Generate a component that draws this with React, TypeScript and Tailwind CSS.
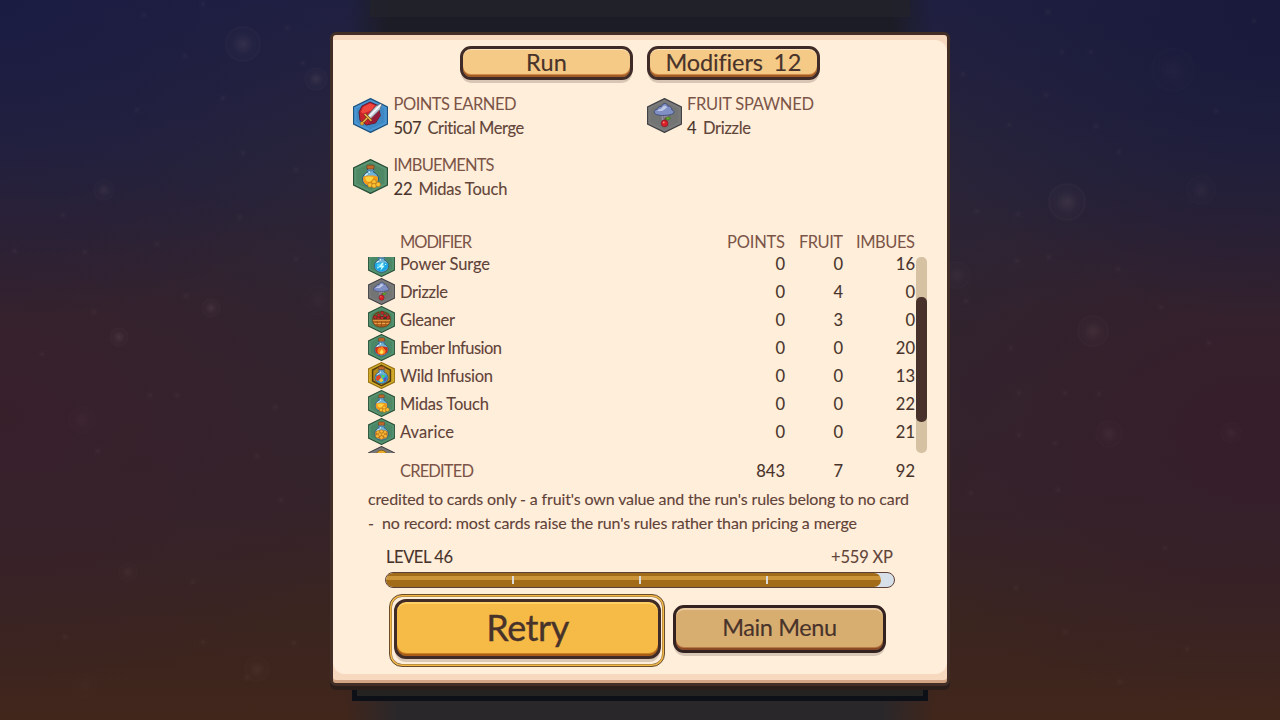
import { useLayoutEffect, useRef, useState, type ReactNode } from "react";
import clsx from "clsx";

/** Single-line label whose tracking is adjusted so that it fills `w` pixels. */
function Label({ children, w, className }: { children: string; w: number; className?: string }) {
  const ref = useRef<HTMLSpanElement>(null);
  const [spacing, setSpacing] = useState(0);
  useLayoutEffect(() => {
    const el = ref.current;
    if (!el || children.length < 2) return;
    el.style.letterSpacing = "0px";
    const next = (w - el.getBoundingClientRect().width) / (children.length - 1);
    el.style.letterSpacing = `${next}px`;
    setSpacing(next);
  }, [children, w]);
  return (
    <span className={clsx("block shrink-0 whitespace-pre", className)} style={{ width: w }}>
      <span ref={ref} style={{ letterSpacing: spacing }}>
        {children}
      </span>
    </span>
  );
}

type Kind = "sword" | "drizzle" | "midas" | "surge" | "gleaner" | "ember" | "wild" | "avarice" | "coin";

const frames: Record<Kind, [string, string, string]> = {
  sword: ["#4a96d3", "#1d527f", "#3279b5"],
  drizzle: ["#7b7b7b", "#404246", "#6c6d6e"],
  midas: ["#5b9470", "#285039", "#447b59"],
  surge: ["#549370", "#285039", "#3f7c5c"],
  gleaner: ["#559370", "#285039", "#3f7c5c"],
  ember: ["#559370", "#285039", "#3f7c5c"],
  wild: ["#d2ab2b", "#94700f", "#b38b1c"],
  avarice: ["#559370", "#285039", "#3f7c5c"],
  coin: ["#7b7b7b", "#404246", "#6c6d6e"],
};

function Flask({ liquid, glow, children, className }: { liquid: string; glow: string; children?: ReactNode; className?: string }) {
  return (
    <g className={className}>
      <path d="M14.500 9.500h6v3.800c3 1.200 4.800 3.700 4.800 6.700 0 4.300-3.300 7.300-7.800 7.300s-7.800-3-7.800-7.300c0-3 1.800-5.500 4.800-6.700z" fill="#6fb3d6" stroke="#2b5275" strokeWidth=".9" />
      <path d="M10.600 17.600c3-1.600 10.800-1.600 13.800 0 1.600 5-1.600 8.800-6.900 8.800s-8.500-3.800-6.900-8.800z" fill={liquid} />
      <path d="M12.300 18.400c2-1.200 6-1.300 8-.3-.3 3.400-2.300 4.700-4.600 4.500-2.200-.1-3.400-2-3.400-4.200z" fill={glow} />
      <path d="M16.300 11.500v2.600M12.300 16.600c.7-1.100 1.500-1.600 2.800-1.900" stroke="#dcf5fa" strokeWidth="1.200" fill="none" />
      <rect x="14" y="6.400" width="7" height="3.800" rx="1" fill="#c06a2a" stroke="#6f3718" strokeWidth=".6" />
      <path d="M13.600 11.800h7.800" stroke="#4a86b0" strokeWidth="1.200" />
      {children}
    </g>
  );
}

function Art({ kind }: { kind: Kind }) {
  if (kind === "sword")
    return (
      <g>
        <path d="M9 8l8-4 8 3.500 2.300 10-4.800 7.500-9 2-6.500-4.500L6 14z" fill="#c9222b" stroke="#5d2038" strokeWidth="1" />
        <path d="M10 9l7-3.500 5 2-4 5-8 3-2-1.500z" fill="#f0463e" />
        <path d="M23 13l3.300 1.500.2 3.500-4.500 6.500-7 1 4-5z" fill="#931a38" />
        <path d="M28.800 5.500l-1.600 5.800L17.400 21l-3.400-3 9-10z" fill="#c3ccd4" stroke="#56616f" strokeWidth=".7" />
        <path d="M27.800 6.600L16 18.700" stroke="#f7fbfd" strokeWidth="1.500" />
        <path d="M11.600 16l6.800 6.700" stroke="#6b401c" strokeWidth="2.800" />
        <path d="M14.200 20l-4.400 4.500" stroke="#6b401c" strokeWidth="2.600" />
        <path d="M11.600 16l6.800 6.700M14.200 20l-4.400 4.500" stroke="#eeb646" strokeWidth="1.500" />
        <circle cx="9" cy="25.400" r="1.800" fill="#e9a931" stroke="#7c521b" strokeWidth=".5" />
      </g>
    );
  if (kind === "drizzle")
    return (
      <g>
        <path d="M15.500 16v6M17.800 15.500v4M20 16v4" stroke="#9d8fa8" strokeWidth="1.400" />
        <path d="M7.500 15.200c-.9-2.200.8-4 2.900-4 .5-2.200 2.300-3 3.900-2.600 1.500-4.200 6-3.800 6.700-.6 2.500-.3 3.700 2 3.800 3.800 2 .4 2.700 2 1.900 3.400-2.700 2-6.300 2-9.400 2.200-3.600.1-7.700 0-9.800-2.200z" fill="#8090c4" stroke="#414b75" strokeWidth=".9" />
        <path d="M10 12.500c1.500-1.700 3.700-.3 5-3 1.800-2.500 4.200-2.100 5 .3-2.300.5-2.700 2.900-5.300 3.100-1.700.2-3.300.3-4.700-.4z" fill="#bdc9e6" />
        <path d="M17.800 24c0-2 .4-3.300 1.500-4.700" stroke="#6c3c22" strokeWidth="1" fill="none" />
        <path d="M18.600 21.200c1.200-2.500 3.400-2.700 5-1.200-.9 2-3.200 2.500-5 1.200z" fill="#66ad27" stroke="#32621c" strokeWidth=".5" />
        <circle cx="17.600" cy="25.400" r="3.300" fill="#dc2027" stroke="#7e1924" strokeWidth=".7" />
        <circle cx="16.700" cy="24.400" r=".9" fill="#ff8a7d" />
      </g>
    );
  if (kind === "gleaner")
    return (
      <g>
        <path d="M6.500 18C5 4.500 30 3.500 28.500 18" fill="none" stroke="#713714" strokeWidth="1.600" />
        <path d="M8 13h19v6H8z" fill="#2b4226" />
        <path d="M14 16l1.500-9M22 8l-3 9M9 11l5 4" stroke="#3f7a2c" strokeWidth="1.600" />
        {[[9.5, 14.5], [14, 12], [18, 15.5], [22, 12.5], [26, 15], [18.500, 9], [13.500, 16.500]].map(([x, y]) => (
          <circle key={`${x}-${y}`} cx={x} cy={y} r="2.200" fill="#c02827" stroke="#651b20" strokeWidth=".5" />
        ))}
        <path d="M6 17.500h23c0 6-4 9.800-11.500 9.800S6 23.500 6 17.500z" fill="#b5641f" stroke="#6b3214" strokeWidth=".9" />
        <path d="M6.300 18.600h22.400M8.500 22.800h18" stroke="#e9a548" strokeWidth="1.300" />
        <path d="M12 20v5M17.500 20v6.500M23 20v5" stroke="#824112" strokeWidth=".8" />
      </g>
    );
  if (kind === "surge")
    return (
      <Flask className="origin-[17.5px_17.5px] scale-[1.16]" liquid="#18a6e4" glow="#4dcdf6">
        <path d="M18 16.500l-3.500 5h3l-1.300 4.200 5-5.700h-3.200l2.200-3.200z" fill="#c9fbff" />
        <circle cx="13.500" cy="22" r="1" fill="#b6f5ff" />
        <circle cx="22" cy="18.500" r=".8" fill="#b6f5ff" />
      </Flask>
    );
  if (kind === "ember")
    return (
      <Flask className="origin-[17.5px_17.5px] scale-[1.12]" liquid="#c9301a" glow="#e04318">
        <path d="M17.800 14.800c.3 3 5.100 4.200 4.400 7.600-.4 2.200-2.600 3.400-4.800 3.400-2.700 0-4.700-1.700-4.600-3.900.1-1.900 1.500-2.300 1.400-4.300 2 .9 3.300-.5 3.600-2.800z" fill="#ff8c1c" />
        <path d="M17.700 19.500c1.200 1.500 2.400 2.500 1.800 4.200-.9 1.700-3.600 1.600-4-.1-.2-1.500 1.600-2.100 2.200-4.100z" fill="#ffe55a" />
      </Flask>
    );
  if (kind === "wild")
    return (
      <g>
        <path d="M17.500 4.200l11.500 6.200v14.200l-11.500 6.200L6 24.600V10.400z" fill="#b28a1e" stroke="#4f3c10" strokeWidth="1.800" />
        <Flask className="origin-[17.5px_17.5px] scale-[1.06]" liquid="#24a0dd" glow="#3aa9dd">
          <path d="M11 18.500l4.500-2 1.500 3.500-4 4.500-2-2z" fill="#e84527" />
          <path d="M17 16.500l5.500 1-3.500 3.500z" fill="#5fd04e" />
          <path d="M14 24l3.500-4 2.500 4-3 1.800z" fill="#eecb36" />
          <path d="M20.500 21.500l3.200-2.500-.7 4.500-2 1.500z" fill="#7542b2" />
        </Flask>
      </g>
    );
  if (kind === "coin") return <circle cx="17.500" cy="13" r="7.500" fill="#e9ab27" stroke="#7e5414" strokeWidth="1" />;
  if (kind === "avarice")
    return (
      <Flask className="origin-[17.5px_17.5px] scale-[1.12]" liquid="#c97a1a" glow="#f8bd34">
        {[[13.5, 18.5], [17.5, 17.5], [21.5, 18.5], [15.500, 21], [19.5, 21], [12.800, 22.8], [22, 22.8], [17.500, 24.500]].map(([x, y]) => (
          <circle key={`${x}-${y}`} cx={x} cy={y} r="2.100" fill="#f9b838" stroke="#a96611" strokeWidth=".6" />
        ))}
      </Flask>
    );
  return (
    <Flask className="origin-[17.5px_17.5px] scale-[1.02]" liquid="#f49c18" glow="#ffd23f">
      {[[17, 25.800], [21, 22.800], [21, 26.500], [25, 25.300]].map(([x, y]) => (
        <circle key={`${x}-${y}`} cx={x} cy={y} r="2.300" fill="#fcc033" stroke="#b06c14" strokeWidth=".6" />
      ))}
    </Flask>
  );
}

function CardIcon({ kind, className }: { kind: Kind; className: string }) {
  const [fill, edge, shade] = frames[kind];
  return (
    <svg viewBox="0 0 35 35" className={clsx("block shrink-0", className)}>
      <path d="M17.500.6L34.500 9v17L17.500 34.400.5 26V9z" fill={fill} stroke={edge} strokeWidth="1.300" />
      <path d="M17.500 3.200L32 10.400v14.200L17.500 31.800 3 24.600V10.400z" fill={shade} fillOpacity=".5" stroke={fill} strokeWidth="1" />
      <Art kind={kind} />
    </svg>
  );
}

function TabButton({ children }: { children: ReactNode }) {
  return (
    <button className="flex h-[34px] w-[173px] items-start justify-center rounded-[11px] border-[3px] border-[#3f2c28] bg-[#f5ca86] text-[23.5px] leading-[26px] text-[#48332b] shadow-[inset_0_1px_0_#ffe5bd,inset_0_-2px_0_#a35b26,inset_0_-3px_0_#cf8b48,0_4px_0_-1px_#d9c6b5] [-webkit-text-stroke:0.15px_#48332b]">
      {children}
    </button>
  );
}

function Stat({ kind, title, titleW, value, valueW, name, nameW }: { kind: Kind; title: string; titleW: number; value: string; valueW: number; name: string; nameW: number }) {
  return (
    <div className="flex h-[49px] w-[293.500px] items-start">
      <CardIcon kind={kind} className="mt-[7px] h-[35px] w-[35px]" />
      <div className="ml-[5.500px]">
        <Label w={titleW} className="h-[25px] leading-[26.500px] text-[#7b5447]">{title}</Label>
        <div className="flex gap-1.5 leading-[25px] [-webkit-text-stroke:0.12px_currentColor]">
          <Label w={valueW} className="text-[#48332b]">{value}</Label>
          <Label w={nameW} className="text-[#624439]">{name}</Label>
        </div>
      </div>
    </div>
  );
}

const rows: { kind: Kind; name: string; w: number; v: [string, string, string] }[] = [
  { kind: "surge", name: "Power Surge", w: 90, v: ["0", "0", "16"] },
  { kind: "drizzle", name: "Drizzle", w: 48, v: ["0", "4", "0"] },
  { kind: "gleaner", name: "Gleaner", w: 55, v: ["0", "3", "0"] },
  { kind: "ember", name: "Ember Infusion", w: 102, v: ["0", "0", "20"] },
  { kind: "wild", name: "Wild Infusion", w: 93, v: ["0", "0", "13"] },
  { kind: "midas", name: "Midas Touch", w: 89, v: ["0", "0", "22"] },
  { kind: "avarice", name: "Avarice", w: 54, v: ["0", "0", "21"] },
];

const grid = "grid grid-cols-[32px_327px_58px_58px_72px] items-center";

const bokeh = [
  [243, 44, 17, 0.75], [316, 79, 11, 0.8], [104, 190, 10, 0.6], [211, 308, 9, 0.8], [119, 337, 9, 0.8], [82, 420, 13, 0.3],
  [128, 572, 9, 0.45], [257, 669, 12, 0.45], [85, 685, 12, 0.2], [318, 300, 14, 0.25], [1173, 70, 21, 0.25], [1067, 202, 18, 0.8],
  [1201, 190, 14, 0.4], [957, 275, 13, 0.4], [1093, 331, 15, 0.6], [1109, 434, 13, 0.5], [1231, 433, 10, 0.4],
];

const motes = [
  [203, 4], [144, 15], [287, 28], [185, 56], [303, 63], [137, 110], [223, 98], [243, 153], [296, 170], [63, 215], [240, 217], [85, 252],
  [15, 251], [296, 259], [157, 244], [186, 296], [94, 312], [42, 354], [150, 395], [177, 395], [275, 407], [257, 456], [98, 451],
  [281, 500], [193, 582], [203, 642], [247, 678], [294, 643], [65, 637], [1048, 12], [963, 74], [1062, 52], [1091, 52], [1046, 95],
  [1009, 125], [1096, 126], [1119, 152], [977, 211], [1018, 214], [1049, 257], [1017, 261], [966, 301], [1118, 269], [1161, 307],
  [1209, 343], [1011, 348], [1019, 393], [1065, 393], [1099, 394], [1055, 443], [1019, 435], [971, 493], [1058, 490], [1165, 548],
  [1187, 649], [1065, 632], [1016, 588], [1216, 111], [1254, 21], [1120, 682],
];

function Backdrop() {
  return (
    <svg viewBox="0 0 1280 720" className="absolute inset-0 h-[720px] w-[1280px]">
      <defs>
        <radialGradient id="glow">
          <stop offset="0" stopColor="#b69a96" stopOpacity=".17" />
          <stop offset=".55" stopColor="#b69a96" stopOpacity=".04" />
          <stop offset=".82" stopColor="#b69a96" stopOpacity=".02" />
          <stop offset=".9" stopColor="#b69a96" stopOpacity=".06" />
          <stop offset="1" stopColor="#b69a96" stopOpacity="0" />
        </radialGradient>
        <linearGradient id="top">
          <stop offset="0" stopColor="#1c1c26" stopOpacity="0" />
          <stop offset=".07" stopColor="#1c1c26" />
          <stop offset=".93" stopColor="#1c1c26" />
          <stop offset="1" stopColor="#1c1c26" stopOpacity="0" />
        </linearGradient>
        <linearGradient id="bottom">
          <stop offset="0" stopColor="#2a272a" stopOpacity="0" />
          <stop offset=".09" stopColor="#2a272a" />
          <stop offset=".91" stopColor="#2a272a" />
          <stop offset="1" stopColor="#2a272a" stopOpacity="0" />
        </linearGradient>
      </defs>
      {bokeh.map(([x, y, r, o]) => (
        <circle key={`${x}-${y}`} cx={x} cy={y} r={r * 1.1} fill="url(#glow)" opacity={o} />
      ))}
      {motes.map(([x, y]) => (
        <circle key={`${x}-${y}`} cx={x} cy={y} r="4.500" fill="url(#glow)" opacity=".4" />
      ))}
      <rect x="348" y="0" width="584" height="40" fill="url(#top)" />
      <rect x="370" y="0" width="540" height="17" fill="#22222b" opacity=".9" />
      <rect x="345" y="690" width="590" height="30" fill="url(#bottom)" />
      <rect x="354.500" y="670" width="571" height="28.500" fill="#242321" stroke="#0e1018" strokeWidth="5" />
    </svg>
  );
}

export default function App() {
  return (
    <div className="relative flex h-[720px] w-[1280px] justify-center overflow-hidden bg-[radial-gradient(ellipse_420px_320px_at_0%_0%,#1b1c42_0%,transparent_100%),radial-gradient(ellipse_420px_320px_at_100%_0%,#191a3c_10%,transparent_100%),radial-gradient(ellipse_400px_280px_at_0%_58%,#38202b_0%,transparent_100%),radial-gradient(ellipse_400px_280px_at_98%_60%,#361e2a_0%,transparent_100%),linear-gradient(180deg,#202042_0%,#28243a_20%,#30242f_45%,#34232a_70%,#3b251f_87%,#41261b_100%)] font-[Lato,'Open_Sans',sans-serif] text-[16.5px]">
      <Backdrop />
      <main className="relative mt-[32px] h-[654px] w-[620px] rounded-[6px] border-[3px] border-[#432d27] bg-[#f6d9bf] shadow-[inset_0_-3px_0_#d4a585,0_4px_0_#2b1d19]">
        <div className="h-[639px] w-full pt-[5px]">
          <div className="h-[634px] rounded-tr-[12px] rounded-b-[12px] bg-[#ffeeda] pt-[6px]">
            <nav className="flex justify-center gap-[14px]">
              <TabButton><Label w={41}>Run</Label></TabButton>
              <TabButton>
                <span className="flex gap-[11px]">
                  <Label w={97}>Modifiers</Label>
                  <Label w={28}>12</Label>
                </span>
              </TabButton>
            </nav>

            <section className="ml-[20px] mt-[11px] flex h-[139px] flex-wrap content-start gap-y-[12px]">
              <Stat kind="sword" title="POINTS EARNED" titleW={123} value="507" valueW={28} name="Critical Merge" nameW={97} />
              <Stat kind="drizzle" title="FRUIT SPAWNED" titleW={127} value="4" valueW={10} name="Drizzle" nameW={48} />
              <Stat kind="midas" title="IMBUEMENTS" titleW={101} value="22" valueW={19} name="Midas Touch" nameW={89} />
            </section>

            <section className="ml-[35px] w-[559px]">
              <div className={clsx(grid, "h-[24px] leading-6 text-[#7b5447]")}>
                <span />
                <Label w={72}>MODIFIER</Label>
                <Label w={58} className="justify-self-end">POINTS</Label>
                <Label w={44} className="justify-self-end">FRUIT</Label>
                <Label w={59} className="justify-self-end">IMBUES</Label>
              </div>
              <div className="mt-[3px] flex h-[196px] overflow-hidden">
                <div className="-mt-[7px] w-[548px] shrink-0">
                  {rows.map((r) => (
                    <div key={r.name} className={clsx(grid, "h-[28px] leading-[14px] text-[#48332b] [-webkit-text-stroke:0.1px_currentColor]")}>
                      <CardIcon kind={r.kind} className="-mt-px h-[27px] w-[27px]" />
                      <Label w={r.w} className="text-[#5f4238]">{r.name}</Label>
                      {r.v.map((n, i) => (
                        <span key={i} className="text-right">{n}</span>
                      ))}
                    </div>
                  ))}
                  <CardIcon kind="coin" className="h-[27px] w-[27px]" />
                </div>
                <div className="h-[196px] w-[11px] shrink-0 rounded-[5px] bg-[#d6c2a3] pt-[40px]">
                  <div className="h-[125px] rounded-[5px] bg-[#48312a]" />
                </div>
              </div>
              <div className={clsx(grid, "mt-[6px] h-[24px] leading-6 text-[#48332b] [-webkit-text-stroke:0.1px_currentColor]")}>
                <span />
                <Label w={74} className="text-[#7b5447] [-webkit-text-stroke:0]">CREDITED</Label>
                <span className="text-right">843</span>
                <span className="text-right">7</span>
                <span className="text-right">92</span>
              </div>
              <div className="mt-[4px] text-[16px] leading-6 text-[#5f4238] [-webkit-text-stroke:0.1px_currentColor]">
                <Label w={541}>credited to cards only - a fruit's own value and the run's rules belong to no card</Label>
                <div className="flex">
                  <Label w={14}>-</Label>
                  <Label w={475}>no record: most cards raise the run's rules rather than pricing a merge</Label>
                </div>
              </div>
            </section>

            <section className="ml-[52px] mt-[10px] w-[510px]">
              <div className="flex h-[24px] justify-between pl-px pr-0.5 leading-6 [-webkit-text-stroke:0.1px_currentColor]">
                <Label w={67} className="text-[#48332b]">LEVEL 46</Label>
                <Label w={62} className="text-[#624439]">+559 XP</Label>
              </div>
              <div className="mt-[3px] h-[16px] overflow-hidden rounded-full border border-[#5b4039] bg-[#d7dfe8]">
                <div className="flex h-[14px] w-[495px] items-center rounded-r-full bg-[linear-gradient(#a16b18_0_3px,#cc9438_3px_7px,#a16b18_7px)] pl-[126px]">
                  <div className="flex gap-[125px]">
                    <i className="h-2 w-0.5 bg-[#dbdad6]" />
                    <i className="h-2 w-0.5 bg-[#dbdad6]" />
                    <i className="h-2 w-0.5 bg-[#dbdad6]" />
                  </div>
                </div>
              </div>
            </section>

            <section className="ml-[56px] mt-[6px] flex items-start gap-[8px]">
              <div className="h-[73px] w-[276px] rounded-[13px] border border-[#6a4b27] shadow-[inset_0_0_0_1.500px_#f2b947,inset_0_0_0_2px_#8b683c]">
                <button className="ml-[4px] mt-[4px] flex h-[60px] w-[267px] items-start justify-center rounded-[12px] border-[3px] border-[#402b27] bg-[#f6ba46] text-[36px] leading-[51px] text-[#48332b] shadow-[inset_0_2px_0_#ffd064,inset_0_-2px_0_#a95e18,inset_0_-3px_0_#cc8024,0_4px_0_-1px_#dac8b7] [-webkit-text-stroke:0.35px_#48332b]">
                  <Label w={83}>Retry</Label>
                </button>
              </div>
              <button className="mt-[11px] flex h-[48px] w-[213px] items-start justify-center rounded-[11px] border-[3px] border-[#33221f] bg-[#d8ad70] text-[23.5px] leading-[38px] text-[#48332b] shadow-[inset_0_2px_0_#e9cba1,inset_0_-2px_0_#8b4a25,inset_0_-3px_0_#b77a47,0_4px_0_-1px_#dac8b7] [-webkit-text-stroke:0.15px_#48332b]">
                <Label w={115}>Main Menu</Label>
              </button>
            </section>
          </div>
        </div>
      </main>
    </div>
  );
}
